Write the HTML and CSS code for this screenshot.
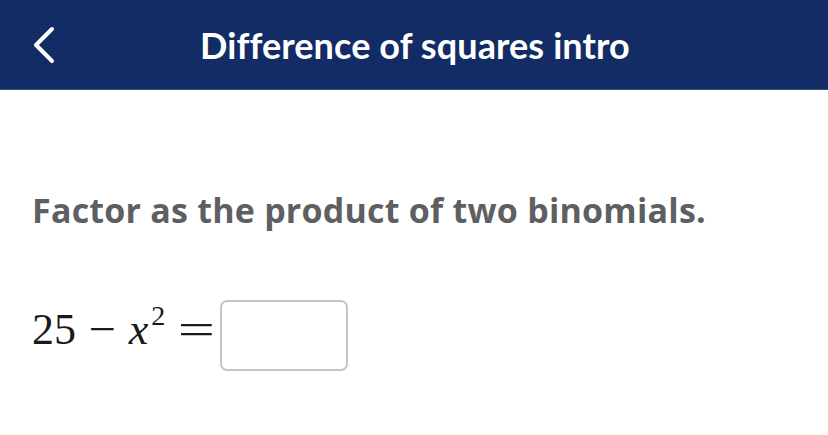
FILE: index.html
```html
<!DOCTYPE html>
<html>
<head>
<meta charset="utf-8">
<link rel="stylesheet" href="styles.css">
</head>
<body>
<header class="topbar">
  <button class="back" aria-label="Back">
    <svg width="24" height="38" viewBox="0 0 24 38"><path d="M20 3 L4 19 L20 35" fill="none" stroke="#fff" stroke-width="4" stroke-linecap="round" stroke-linejoin="round"/></svg>
  </button>
  <h1 class="title">Difference of squares intro</h1>
</header>
<main class="content">
  <p class="prompt">Factor as the product of two binomials.</p>
  <div class="equation">
    <span class="num">25</span>
    <span class="op minus">−</span>
    <span class="var">x<sup>2</sup></span>
    <span class="op eq">=</span>
    <span class="answer"></span>
  </div>
</main>
</body>
</html>
```
FILE: styles.css
```css
html, body { margin: 0; padding: 0; background: #fff; }
body { width: 828px; height: 435px; overflow: hidden; }
.topbar {
  height: 89px;
  background: #132c66;
  border-bottom: 1px solid #2d4f78;
  display: flex;
  align-items: center;
  padding-left: 32px;
}
.back {
  background: none; border: 0; padding: 0; margin: 0;
  width: 24px; height: 38px; display: flex;
}
.title {
  margin: 0 0 0 144px;
  color: #fff;
  font-family: Lato, "Open Sans", sans-serif;
  font-weight: 700;
  font-size: 36px;
  letter-spacing: 0.1px;
  line-height: 1;
}
.content { padding: 0 0 0 32px; }
.prompt {
  margin: 100px 0 0 0;
  font-family: "Open Sans", Lato, sans-serif;
  font-weight: 700;
  font-size: 34px;
  letter-spacing: 0.22px;
  line-height: 40px;
  color: #5e5f62;
}
.equation {
  margin-top: 64px;
  display: flex;
  align-items: center;
  font-family: "Liberation Serif", serif;
  font-size: 44px;
  color: #1a1a1a;
  height: 71px;
}
.num { display: inline-block; }
.op { display: inline-block; }
.minus { margin: 0 14px 0 14px; transform: scaleX(1.1); }
.var { font-style: italic; display: inline-block; }
.var sup { font-size: 28px; font-style: normal; vertical-align: 19px; margin-left: 3px; line-height: 0; }
.eq { margin: 0 11px 0 19px; transform: scaleX(1.5); }
.answer {
  display: block;
  width: 124px;
  height: 67px;
  margin-top: 11px;
  border: 2px solid #c6c6c6;
  border-radius: 7px;
}
```
